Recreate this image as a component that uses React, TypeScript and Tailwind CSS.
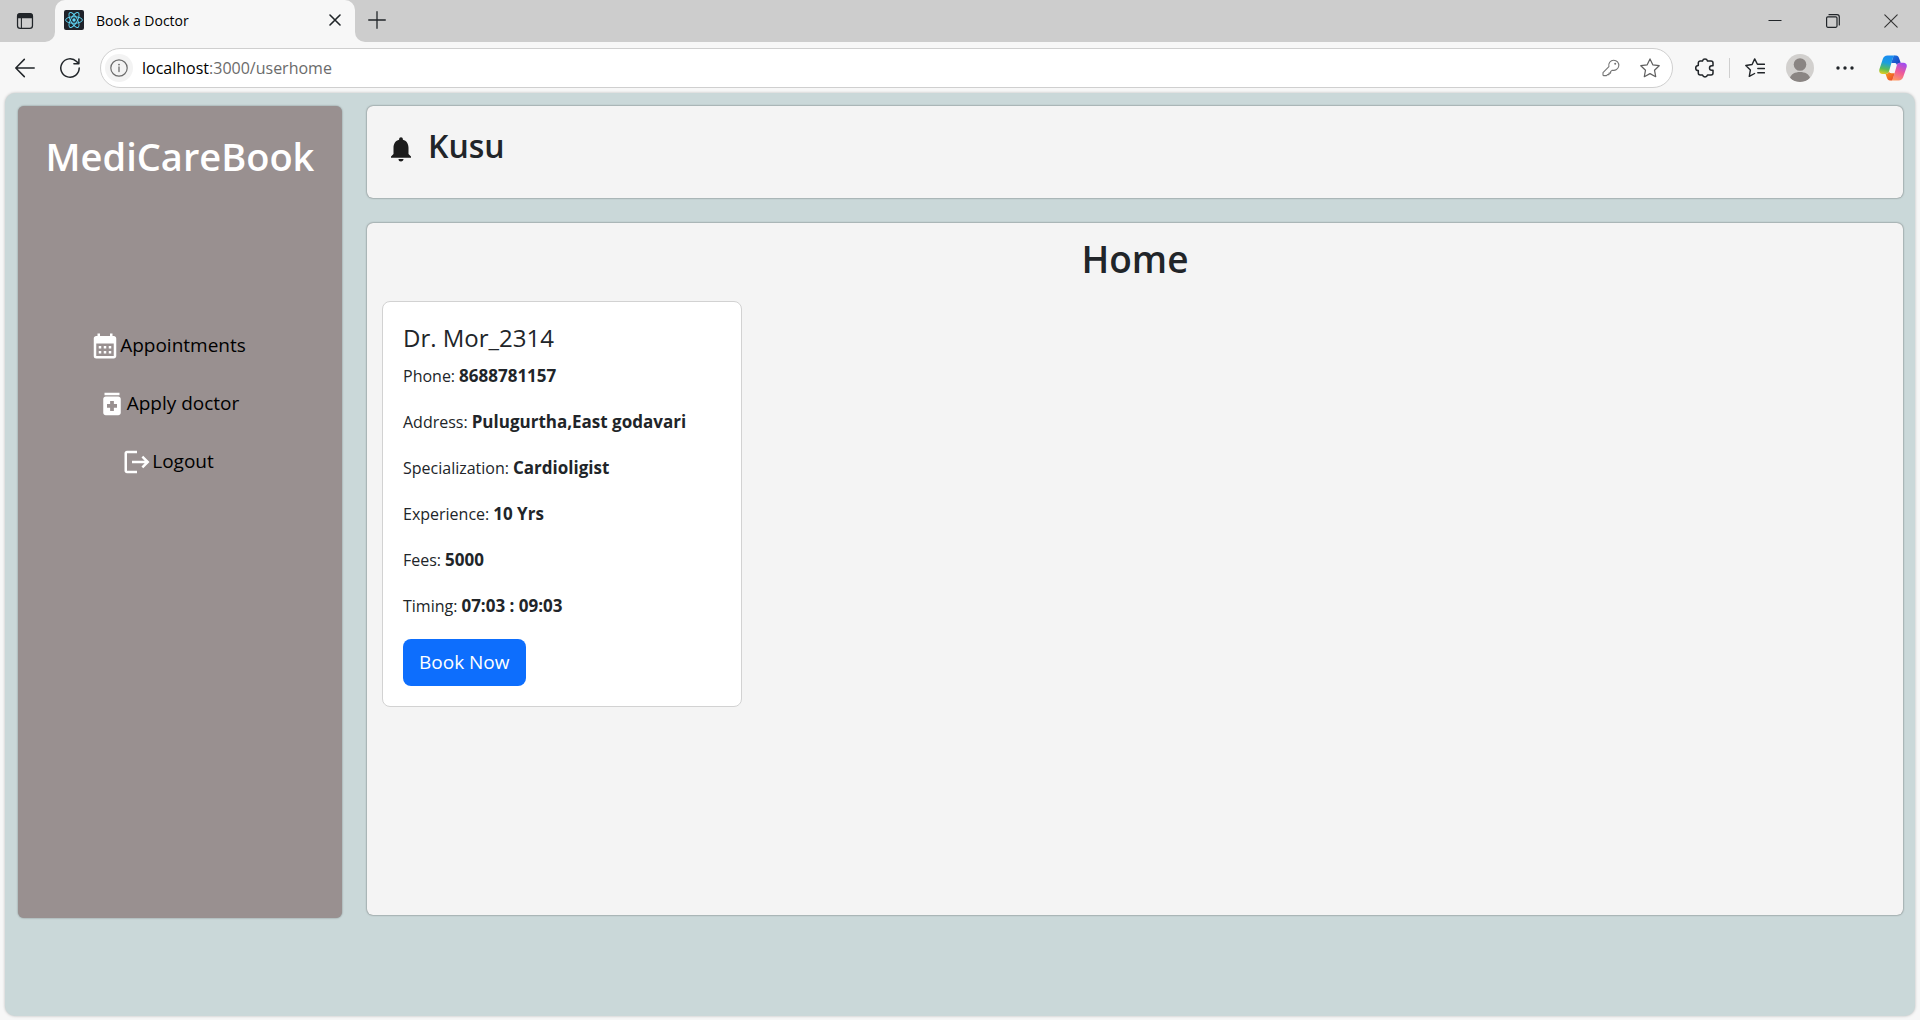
import React from "react";
import { MdCalendarMonth, MdMedication, MdLogout, MdNotifications } from "react-icons/md";

type IconProps = { className?: string };

const stroke = {
  fill: "none",
  stroke: "currentColor",
  strokeLinecap: "round" as const,
  strokeLinejoin: "round" as const,
};

function TabActionsIcon({ className }: IconProps) {
  return (
    <svg viewBox="0 0 20 20" className={className} aria-hidden="true">
      <rect x="1.7" y="1.7" width="16.6" height="16.6" rx="3" {...stroke} strokeWidth="1.4" />
      <path d="M1.5 7V4.5a3 3 0 0 1 3-3h11a3 3 0 0 1 3 3V7z" fill="currentColor" />
      <path d="M6 6v12" {...stroke} strokeWidth="1.2" />
    </svg>
  );
}

function ReactLogo({ className }: IconProps) {
  return (
    <svg viewBox="0 0 20 20" className={className} aria-hidden="true">
      <rect width="20" height="20" rx="2" fill="#20232a" />
      <g fill="none" stroke="#61dafb" strokeWidth="0.9">
        <ellipse cx="10" cy="10" rx="8.4" ry="3.3" />
        <ellipse cx="10" cy="10" rx="8.4" ry="3.3" transform="rotate(60 10 10)" />
        <ellipse cx="10" cy="10" rx="8.4" ry="3.3" transform="rotate(120 10 10)" />
      </g>
      <circle cx="10" cy="10" r="1.7" fill="#61dafb" />
    </svg>
  );
}

function CloseIcon({ className }: IconProps) {
  return (
    <svg viewBox="0 0 12 12" className={className} aria-hidden="true">
      <path d="M1 1l10 10M11 1L1 11" {...stroke} strokeWidth="1.6" />
    </svg>
  );
}

function PlusIcon({ className }: IconProps) {
  return (
    <svg viewBox="0 0 18 18" className={className} aria-hidden="true">
      <path d="M9 .7v16.6M.7 9h16.6" {...stroke} strokeWidth="1.3" />
    </svg>
  );
}

function MinimizeIcon({ className }: IconProps) {
  return (
    <svg viewBox="0 0 14 14" className={className} aria-hidden="true">
      <path d="M.5 6.5h13" fill="none" stroke="currentColor" strokeWidth="1" />
    </svg>
  );
}

function RestoreIcon({ className }: IconProps) {
  return (
    <svg viewBox="0 0 14 14" className={className} aria-hidden="true">
      <rect x=".6" y="2.9" width="10.4" height="10.4" rx="1.2" {...stroke} strokeWidth="1.2" />
      <path d="M3 .7h8a2.3 2.3 0 0 1 2.3 2.3v8" {...stroke} strokeWidth="1.2" />
    </svg>
  );
}

function WindowCloseIcon({ className }: IconProps) {
  return (
    <svg viewBox="0 0 14 14" className={className} aria-hidden="true">
      <path d="M.8.8l12.4 12.4M13.2.8L.8 13.2" {...stroke} strokeWidth="1.1" />
    </svg>
  );
}

function BackIcon({ className }: IconProps) {
  return (
    <svg viewBox="0 0 20 20" className={className} aria-hidden="true">
      <path d="M19.2 10H.9M9.3 1.4L.8 10l8.5 8.6" {...stroke} strokeWidth="1.5" />
    </svg>
  );
}

function RefreshIcon({ className }: IconProps) {
  return (
    <svg viewBox="0 0 20 20" className={className} aria-hidden="true">
      <path d="M19.2 10A9.2 9.2 0 1 1 16.6 3.6L18.4 5.4M18.9.9v4.900h-5" {...stroke} strokeWidth="1.5" />
    </svg>
  );
}

function InfoIcon({ className }: IconProps) {
  return (
    <svg viewBox="0 0 18 18" className={className} aria-hidden="true">
      <circle cx="9" cy="9" r="8.2" {...stroke} strokeWidth="1.2" />
      <path d="M9 8v4.5" {...stroke} strokeWidth="1.3" />
      <circle cx="9" cy="5.6" r="0.9" fill="currentColor" />
    </svg>
  );
}

function KeyIcon({ className }: IconProps) {
  return (
    <svg viewBox="0 0 18 18" className={className} aria-hidden="true">
      <path
        d="M11.7 1.2a5.1 5.1 0 1 1-1.4 10L8.6 12.6v1.5H7v1.5H5.5l-1 1h-3a.5.5 0 0 1-.5-.5v-2.5L6.9 7.7a5.1 5.1 0 0 1 4.8-6.5z"
        {...stroke}
        strokeWidth="1.1"
      />
      <circle cx="13.2" cy="4.8" r="1" fill="currentColor" />
    </svg>
  );
}

function StarIcon({ className }: IconProps) {
  return (
    <svg viewBox="0 0 20 20" className={className} aria-hidden="true">
      <path
        d="M10 .9l2.800 5.900 6.400.9-4.700 4.500 1.200 6.500L10 15.600l-5.700 3.100 1.200-6.500L.8 7.700l6.400-.9z"
        {...stroke}
        strokeWidth="1.2"
      />
    </svg>
  );
}

function PuzzleIcon({ className }: IconProps) {
  return (
    <svg viewBox="0 0 20 20" className={className} aria-hidden="true">
      <path
        d="M5.3 3h2.200a2.600 2.600 0 0 1 5 0h3.500a2 2 0 0 1 2 2v2.700h-1.200a2.300 2.300 0 0 0 0 4.600H18V15a2 2 0 0 1-2 2h-3.500a2.600 2.600 0 0 1-5 0H5.300a2 2 0 0 1-2-2v-2.400a2.600 2.600 0 0 1 0-5.200V5a2 2 0 0 1 2-2z"
        {...stroke}
        strokeWidth="1.5"
      />
    </svg>
  );
}

function FavoritesIcon({ className }: IconProps) {
  return (
    <svg viewBox="0 0 20 20" className={className} aria-hidden="true">
      <path
        d="M19.400 6.200h-7L9.700.9 7.100 6.500.8 7.500l4.600 4.400-1.100 6.500 5.300-2.900M12.800 10.500h6.600M12.800 14.800h6.600"
        {...stroke}
        strokeWidth="1.4"
      />
    </svg>
  );
}

function ProfileIcon({ className }: IconProps) {
  return (
    <svg viewBox="0 0 28 28" className={className} aria-hidden="true">
      <defs>
        <clipPath id="profile-clip">
          <circle cx="14" cy="14" r="14" />
        </clipPath>
      </defs>
      <circle cx="14" cy="14" r="14" fill="#d2d0ce" />
      <g fill="#8a8583" clipPath="url(#profile-clip)">
        <circle cx="14" cy="10.5" r="6.3" />
        <path d="M4 24c1-4 5-6 10-6s9 2 10 6c-2 3-6 4-10 4S6 27 4 24z" />
      </g>
    </svg>
  );
}

function MoreIcon({ className }: IconProps) {
  return (
    <svg viewBox="0 0 18 4" className={className} aria-hidden="true">
      <circle cx="2" cy="2" r="1.7" fill="currentColor" />
      <circle cx="9" cy="2" r="1.7" fill="currentColor" />
      <circle cx="16" cy="2" r="1.7" fill="currentColor" />
    </svg>
  );
}

function CopilotIcon({ className }: IconProps) {
  return (
    <svg viewBox="0 0 28 26" className={className} aria-hidden="true">
      <defs>
        <linearGradient id="cp-left" x1="0.300" y1="0" x2="0.100" y2="1">
          <stop offset="0" stopColor="#1b8df0" />
          <stop offset="0.350" stopColor="#1a9fe0" />
          <stop offset="0.700" stopColor="#5bbd55" />
          <stop offset="1" stopColor="#f2cf1d" />
        </linearGradient>
        <linearGradient id="cp-right" x1="0.700" y1="0" x2="0.300" y2="1">
          <stop offset="0" stopColor="#a04df0" />
          <stop offset="0.500" stopColor="#ee5a9a" />
          <stop offset="1" stopColor="#ff9a63" />
        </linearGradient>
        <linearGradient id="cp-top" x1="0" y1="0" x2="1" y2="1">
          <stop offset="0" stopColor="#1b7fe6" />
          <stop offset="1" stopColor="#1a35b8" />
        </linearGradient>
        <linearGradient id="cp-bottom" x1="0" y1="0" x2="1" y2="1">
          <stop offset="0" stopColor="#f9a21a" />
          <stop offset="1" stopColor="#ea3f2c" />
        </linearGradient>
      </defs>
      <path d="M8.500.5h7.800c-1.600.4-2.200 1.600-2.700 3.200L10 16.500c-.5 1.500-1.500 2.500-3.200 2.500H3.500C.8 19-.3 17 .4 14.200L3.800 4C4.600 1.700 6 .5 8.500.5z" fill="url(#cp-left)" />
      <path d="M19.500 25.500h-7.800c1.600-.4 2.200-1.600 2.700-3.200L17.900 10c.5-1.500 1.500-2.300 3.200-2.300h3.400c2.700 0 3.800 2 3.100 4.600L24.200 22c-.8 2.300-2.200 3.500-4.700 3.500z" fill="url(#cp-right)" />
      <path d="M15.500.5h1.500c1.700 0 2.500 1 3 2.500l1.700 4.700h-.6c-1.700 0-2.700.8-3.200 2.300l-.4-1c-.4-.8-1-1-2-1h-3.200l1.300-4.300c.5-1.600 1-2.800 1.900-3.200z" fill="url(#cp-top)" />
      <path d="M12.500 25.500H11c-1.700 0-2.500-1-3-2.500L6.600 19c1.900 0 2.900-1 3.400-2.500l.4.800c.4.700 1 .9 2 .9h3.200l-1.200 4.100c-.5 1.600-1 2.800-1.900 3.200z" fill="url(#cp-bottom)" />
    </svg>
  );
}

function TitleBar() {
  return (
    <header className="flex h-[42px] shrink-0 bg-[#f7f7f7]">
      <div className="flex w-[55px] items-center rounded-br-[10px] bg-[#cdcdcd] pl-4">
        <button type="button" aria-label="Tab actions">
          <TabActionsIcon className="h-[18px] w-[18px]" />
        </button>
      </div>
      <div className="bg-[#cdcdcd]">
        <div className="flex h-10 w-[300px] items-center rounded-t-[10px] bg-[#f7f7f7] pl-[9px] pr-[14px]">
          <ReactLogo className="h-5 w-5" />
          <span className="ml-3 flex-1 text-[14px] text-black">Book a Doctor</span>
          <button type="button" aria-label="Close tab">
            <CloseIcon className="h-3 w-3" />
          </button>
        </div>
        <div className="h-[2px] bg-[#f7f7f7]" />
      </div>
      <div className="flex flex-1 items-center rounded-bl-[10px] bg-[#cdcdcd] pl-[13px]">
        <button type="button" aria-label="New tab" className="pb-[2px]">
          <PlusIcon className="h-[18px] w-[18px]" />
        </button>
        <div className="ml-auto flex items-center gap-11 pr-[22px]">
          <button type="button" aria-label="Minimize">
            <MinimizeIcon className="h-[14px] w-[14px]" />
          </button>
          <button type="button" aria-label="Restore">
            <RestoreIcon className="h-[14px] w-[14px]" />
          </button>
          <button type="button" aria-label="Close window" className="text-[#333]">
            <WindowCloseIcon className="h-[14px] w-[14px]" />
          </button>
        </div>
      </div>
    </header>
  );
}

function Toolbar() {
  return (
    <nav aria-label="Browser" className="flex h-[51px] shrink-0 items-center bg-[#f7f7f7] pl-[15px] pr-[13px]">
      <button type="button" aria-label="Back">
        <BackIcon className="h-5 w-5" />
      </button>
      <button type="button" aria-label="Refresh" className="ml-[25px]">
        <RefreshIcon className="h-5 w-5" />
      </button>
      <div className="ml-5 flex h-10 flex-1 items-center rounded-full border border-[#cfcfcf] bg-white pl-1 pr-3">
        <button
          type="button"
          aria-label="Site information"
          className="flex h-7 w-7 items-center justify-center rounded-full bg-[#f3f3f3] text-[#6b6b6b]"
        >
          <InfoIcon className="h-[18px] w-[18px]" />
        </button>
        <p className="ml-[9px] flex-1 text-[16px] text-[#6b6b6b]">
          <span className="text-black">localhost</span>:3000/userhome
        </p>
        <button type="button" aria-label="Saved passwords" className="text-[#757575]">
          <KeyIcon className="h-[18px] w-[18px]" />
        </button>
        <button type="button" aria-label="Add to favorites" className="ml-5 text-[#5f5f5f]">
          <StarIcon className="h-5 w-5" />
        </button>
      </div>
      <button type="button" aria-label="Extensions" className="ml-[22px]">
        <PuzzleIcon className="h-5 w-5" />
      </button>
      <span className="ml-[14px] h-5 w-px bg-[#cfcfcf]" />
      <button type="button" aria-label="Favorites" className="ml-[15px]">
        <FavoritesIcon className="h-5 w-5" />
      </button>
      <button type="button" aria-label="Profile" className="ml-[21px]">
        <ProfileIcon className="h-7 w-7" />
      </button>
      <button type="button" aria-label="Settings and more" className="ml-[22px]">
        <MoreIcon className="h-1 w-[18px]" />
      </button>
      <button type="button" aria-label="Copilot" className="ml-[25px]">
        <CopilotIcon className="h-[26px] w-7" />
      </button>
    </nav>
  );
}

const menu = [
  { label: "Appointments", icon: MdCalendarMonth },
  { label: "Apply doctor", icon: MdMedication },
  { label: "Logout", icon: MdLogout },
];

function Sidebar() {
  return (
    <aside className="flex h-[812px] w-[324px] shrink-0 flex-col items-center rounded-md bg-[#999090] shadow-[0_0_2px_rgba(0,0,0,0.4)]">
      <h2 className="mt-[23px] text-[38px] leading-[54px] font-semibold text-white">MediCareBook</h2>
      <ul className="mt-[148px] mr-6 flex flex-col items-center gap-7">
        {menu.map(({ label, icon: Icon }) => (
          <li key={label}>
            <a href="#" className="flex items-center text-[19px] leading-7 text-black">
              <Icon className="h-[30px] w-[30px] text-white" />
              <span className="pb-[2px]">{label}</span>
            </a>
          </li>
        ))}
      </ul>
    </aside>
  );
}

const details = [
  ["Phone", "8688781157"],
  ["Address", "Pulugurtha,East godavari"],
  ["Specialization", "Cardioligist"],
  ["Experience", "10 Yrs"],
  ["Fees", "5000"],
  ["Timing", "07:03 : 09:03"],
];

function DoctorCard() {
  return (
    <article className="w-[360px] rounded-lg border border-[#d2d2d2] bg-white p-5">
      <h5 className="text-[24px] leading-[32px] font-medium">Dr. Mor_2314</h5>
      <dl className="mt-[7px] flex flex-col gap-4 leading-[30px]">
        {details.map(([label, value]) => (
          <div key={label} className="flex items-baseline gap-1">
            <dt className="text-[16px]">{label}:</dt>
            <dd className="text-[17px] font-bold">{value}</dd>
          </div>
        ))}
      </dl>
      <button type="button" className="mt-[18px] h-[47px] rounded-lg bg-[#0d6efd] px-4 text-[19px] text-white">
        Book Now
      </button>
    </article>
  );
}

export default function App() {
  return (
    <div className="flex min-h-screen flex-col bg-[#f7f7f7] font-['Open_Sans','Noto_Sans',sans-serif] text-[#212529]">
      <TitleBar />
      <Toolbar />
      <div className="mx-[5px] mb-1 flex flex-1 items-start gap-[25px] rounded-[10px] bg-[#cad8d9] pt-[13px] pr-3 pb-3 pl-[13px] shadow-[0_0_3px_rgba(0,0,0,0.25)]">
        <Sidebar />
        <main className="flex flex-1 flex-col gap-[25px]">
          <section className="flex h-[92px] items-start rounded-md bg-[#f4f4f4] pt-5 pl-[19px] shadow-[0_0_2px_rgba(0,0,0,0.6)]">
            <MdNotifications className="mt-2 h-[30px] w-[30px] text-[#1c1c1c]" />
            <h3 className="ml-3 text-[32px] leading-10 font-semibold">Kusu</h3>
          </section>
          <section className="h-[692px] rounded-md bg-[#f4f4f4] px-[15px] pt-[11px] shadow-[0_0_2px_rgba(0,0,0,0.6)]">
            <h2 className="mb-[17px] text-center text-[37px] leading-[50px] font-semibold">Home</h2>
            <DoctorCard />
          </section>
        </main>
      </div>
    </div>
  );
}
